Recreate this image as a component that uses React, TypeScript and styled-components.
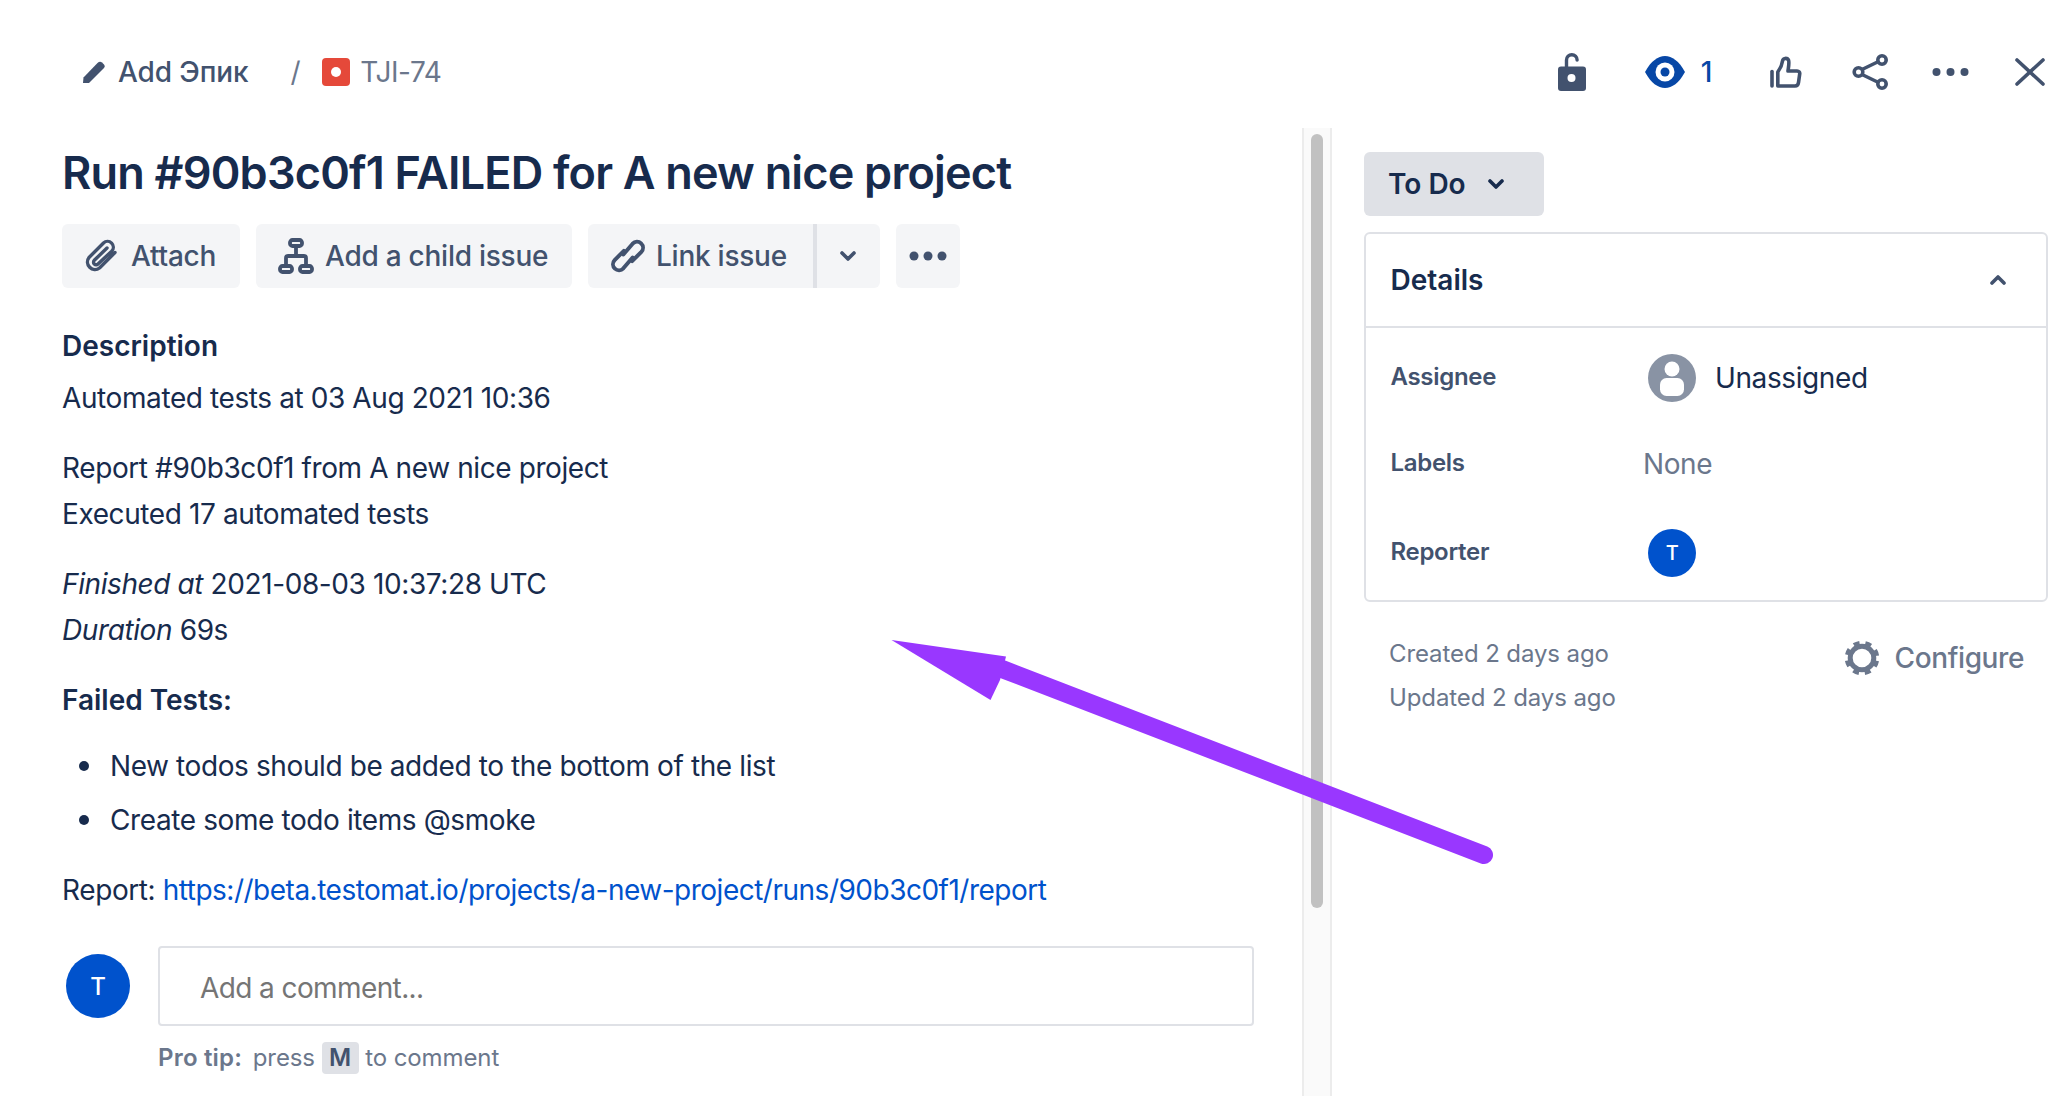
import styled, { createGlobalStyle } from "styled-components";

const GlobalStyle = createGlobalStyle`
  html, body {
    margin: 0;
    padding: 0;
    background: #fff;
  }
  * {
    box-sizing: border-box;
  }
`;

function App() {
  return (
    <Page>
      <GlobalStyle />
      <Header>
        <Breadcrumbs>
          <EpicLink>
            <svg width="22" height="22" viewBox="0 0 22 22">
              <path d="M.5 16.500 14.500 2q2.300-2 4.500-.5l2 2q1.500 2-.5 4L6 22H0z" fill="#42526e" />
            </svg>
            Add Эпик
          </EpicLink>
          <Slash>/</Slash>
          <IssueKey>
            <svg width="28" height="28" viewBox="0 0 28 28">
              <rect width="28" height="28" rx="4" fill="#e5493a" />
              <circle cx="14" cy="14" r="5" fill="#fff" />
            </svg>
            TJI-74
          </IssueKey>
        </Breadcrumbs>
        <HeaderIcons>
          <LockIcon width="28" height="38" viewBox="0 0 28 38">
            <path d="M8.500 17V7a5.300 5.300 0 0 1 10.600 0" fill="none" stroke="#42526e" strokeWidth="3.400" strokeLinecap="round" />
            <rect y="13.500" width="28" height="24.500" rx="3" fill="#42526e" />
            <circle cx="13.500" cy="25" r="4" fill="#fff" />
          </LockIcon>
          <Watchers>
            <svg width="40" height="32" viewBox="0 0 40 32">
              <path d="M0 16C6 5 13 0 20 0s14 5 20 16c-6 11-13 16-20 16S6 27 0 16z" fill="#0747a6" />
              <circle cx="20" cy="16" r="9.500" fill="#fff" />
              <circle cx="20" cy="16" r="4.500" fill="#0747a6" />
            </svg>
            <WatchCount>1</WatchCount>
          </Watchers>
          <ThumbIcon width="32" height="32" viewBox="0 0 32 32" fill="none" stroke="#42526e" strokeWidth="3.600" strokeLinejoin="round" strokeLinecap="round">
            <path d="M2 15.500V30" />
            <path d="M7.800 30V16c2.200-3 4.200-7 4.700-11 .5-3 4.500-3.500 6-1 1 2 0 7-.5 11h9c2 0 3 1.500 2.700 3l-1.200 8.500c-.3 2.300-1.500 3.500-3.500 3.500z" />
          </ThumbIcon>
          <ShareIcon width="37" height="36" viewBox="0 0 37 36" fill="none" stroke="#42526e" strokeWidth="3.600">
            <path d="M10 15.500 25.500 8M10 20.500 25.500 28" />
            <circle cx="6.500" cy="18" r="4.300" />
            <circle cx="30" cy="6" r="4.200" />
            <circle cx="30" cy="30" r="4.200" />
          </ShareIcon>
          <DotsIcon width="37" height="10" viewBox="0 0 37 10" fill="#42526e">
            <circle cx="4.500" cy="5" r="4" />
            <circle cx="18.500" cy="5" r="4" />
            <circle cx="32.500" cy="5" r="4" />
          </DotsIcon>
          <CloseIcon width="30" height="28" viewBox="0 0 30 28" stroke="#42526e" strokeWidth="3.600" strokeLinecap="round">
            <path d="M2 2l26 24M28 2 2 26" />
          </CloseIcon>
        </HeaderIcons>
      </Header>

      <Body>
        <Main>
          <Title>Run #90b3c0f1 FAILED for A new nice project</Title>
          <Actions>
            <ActionButton $width={178}>
              <svg width="36" height="36" viewBox="0 0 36 36" fill="none" stroke="#42526e" strokeWidth="3.400" strokeLinecap="round" strokeLinejoin="round">
                <path d="M31 14.500 15.500 30A7.500 7.500 0 0 1 5 19.500L19.500 5a5.800 5.800 0 0 1 8.200 8.200L14 26a2.600 2.600 0 0 1-3.700-3.700L23 10" />
              </svg>
              Attach
            </ActionButton>
            <ActionButton $width={316}>
              <svg width="36" height="36" viewBox="0 0 36 36" fill="none" stroke="#42526e" strokeWidth="3.800" strokeLinejoin="round">
                <rect x="12" y="2" width="12" height="6" rx="2.500" />
                <rect x="2" y="28" width="12" height="6" rx="2.500" />
                <rect x="22" y="28" width="12" height="6" rx="2.500" />
                <path d="M18 8v10M8 28v-8q0-2 2-2h16q2 0 2 2v8" />
              </svg>
              Add a child issue
            </ActionButton>
            <SplitButton>
              <SplitMain>
                <svg width="36" height="36" viewBox="0 0 35 33" fill="none" stroke="#42526e" strokeWidth="3.800" strokeLinecap="round" strokeLinejoin="round">
                  <path d="M13 15 22 4.500a5.800 5.800 0 0 1 8.500 8l-9 9" />
                  <path d="m22 18-9 10.500a5.800 5.800 0 0 1-8.500-8l9-9" />
                </svg>
                Link issue
              </SplitMain>
              <SplitToggle>
                <Chevron width="16" height="10" viewBox="0 0 16 10" color="#42526e">
                  <path d="M2 2l6 6 6-6" />
                </Chevron>
              </SplitToggle>
            </SplitButton>
            <MoreButton>
              <svg width="38" height="10" viewBox="0 0 38 10" fill="#42526e">
                <circle cx="5" cy="5" r="4.500" />
                <circle cx="19" cy="5" r="4.500" />
                <circle cx="33" cy="5" r="4.500" />
              </svg>
            </MoreButton>
          </Actions>

          <SectionHeading>Description</SectionHeading>
          <Paragraph>Automated tests at 03 Aug 2021 10:36</Paragraph>
          <Paragraph>
            Report #90b3c0f1 from A new nice project
            <br />
            Executed 17 automated tests
          </Paragraph>
          <Paragraph>
            <em>Finished at</em> 2021-08-03 10:37:28 UTC
            <br />
            <em>Duration</em> 69s
          </Paragraph>
          <Paragraph>
            <strong>Failed Tests:</strong>
          </Paragraph>
          <FailedList>
            <li>New todos should be added to the bottom of the list</li>
            <li>Create some todo items @smoke</li>
          </FailedList>
          <Paragraph>
            Report: <ReportLink href="#">https://beta.testomat.io/projects/a-new-project/runs/90b3c0f1/report</ReportLink>
          </Paragraph>

          <CommentRow>
            <CommentAvatar>T</CommentAvatar>
            <CommentBox>Add a comment...</CommentBox>
          </CommentRow>
          <ProTip>
            <strong>Pro tip:</strong> press <Key>M</Key> to comment
          </ProTip>
        </Main>

        <ScrollTrack>
          <ScrollThumb />
        </ScrollTrack>

        <Side>
          <StatusButton>
            To Do
            <Chevron width="16" height="10" viewBox="0 0 16 10" color="#172b4d">
              <path d="M2 2l6 6 6-6" />
            </Chevron>
          </StatusButton>
          <DetailsCard>
            <DetailsHeader>
              Details
              <Chevron width="16" height="10" viewBox="0 0 16 10" color="#42526e">
                <path d="M2 8l6-6 6 6" />
              </Chevron>
            </DetailsHeader>
            <DetailsGrid>
              <FieldLabel>Assignee</FieldLabel>
              <AssigneeValue>
                <svg width="48" height="48" viewBox="0 0 48 48">
                  <circle cx="24" cy="24" r="24" fill="#8993a4" />
                  <circle cx="24" cy="15" r="7.500" fill="#fff" />
                  <rect x="12" y="24" width="24" height="18" rx="6.500" fill="#fff" />
                </svg>
                Unassigned
              </AssigneeValue>
              <FieldLabel>Labels</FieldLabel>
              <NoneValue>None</NoneValue>
              <FieldLabel>Reporter</FieldLabel>
              <ReporterValue>
                <ReporterAvatar>T</ReporterAvatar>
              </ReporterValue>
            </DetailsGrid>
          </DetailsCard>
          <SideFooter>
            <Dates>
              <div>Created 2 days ago</div>
              <div>Updated 2 days ago</div>
            </Dates>
            <ConfigureLink>
              <svg width="36" height="36" viewBox="0 0 36 36" fill="none" stroke="#6b778c">
                <circle cx="18" cy="18" r="11.800" strokeWidth="5" />
                <circle cx="18" cy="18" r="15.300" strokeWidth="4" strokeDasharray="6 6.017" strokeDashoffset="-3" />
              </svg>
              Configure
            </ConfigureLink>
          </SideFooter>
        </Side>
      </Body>

      <ArrowOverlay width="2068" height="1096" viewBox="0 0 2068 1096">
        <path d="M1002 669 L1484 855" fill="none" stroke="#9937ff" strokeWidth="18" strokeLinecap="round" />
        <path d="M891.500 640 L1006 656.500 L1000 680 L990.500 700 Z" fill="#9937ff" />
      </ArrowOverlay>
    </Page>
  );
}

const Page = styled.div`
  position: relative;
  width: 2068px;
  height: 1096px;
  overflow: hidden;
  background: #fff;
  color: #172b4d;
  font-family: Inter, "Noto Sans", "Liberation Sans", sans-serif;
  font-size: 28px;
  letter-spacing: -0.4px;
`;

const Header = styled.header`
  display: flex;
  align-items: center;
  justify-content: space-between;
  height: 128px;
  padding: 16px 23px 0 83px;
`;

const Breadcrumbs = styled.div`
  display: flex;
  align-items: center;
`;

const EpicLink = styled.span`
  display: flex;
  align-items: center;
  gap: 13px;
  color: #42526e;
  font-weight: 500;
  letter-spacing: -0.1px;
`;

const Slash = styled.span`
  margin: 0 22px 0 42px;
  color: #6b778c;
`;

const IssueKey = styled.span`
  display: flex;
  align-items: center;
  gap: 10px;
  color: #6b778c;
`;

const HeaderIcons = styled.div`
  display: flex;
  align-items: center;
`;

const LockIcon = styled.svg`
  margin-right: 59px;
`;

const Watchers = styled.div`
  display: flex;
  align-items: center;
  gap: 16px;
  margin-right: 58px;
`;

const WatchCount = styled.span`
  color: #0747a6;
  font-weight: 500;
`;

const ThumbIcon = styled.svg`
  margin-right: 50px;
`;

const ShareIcon = styled.svg`
  margin-right: 43px;
`;

const DotsIcon = styled.svg`
  margin-right: 46px;
`;

const CloseIcon = styled.svg``;

const Body = styled.div`
  display: flex;
  height: 968px;
`;

const Main = styled.main`
  flex: none;
  width: 1302px;
  padding-left: 62px;
`;

const Title = styled.h1`
  margin: 0;
  font-size: 45px;
  font-weight: 600;
  line-height: 90px;
  letter-spacing: -0.8px;
`;

const Actions = styled.div`
  display: flex;
  gap: 16px;
  margin-top: 6px;
`;

const ActionButton = styled.div<{ $width: number }>`
  display: flex;
  align-items: center;
  gap: 11px;
  width: ${(p) => p.$width}px;
  height: 64px;
  padding-left: 22px;
  border-radius: 6px;
  background: #f4f5f7;
  color: #42526e;
  font-weight: 500;
  letter-spacing: -0.25px;
`;

const SplitButton = styled.div`
  display: flex;
  height: 64px;
  border-radius: 6px;
  background: #f4f5f7;
  color: #42526e;
  font-weight: 500;
  letter-spacing: -0.25px;
  overflow: hidden;
`;

const SplitMain = styled.div`
  display: flex;
  align-items: center;
  gap: 10px;
  width: 225px;
  padding-left: 22px;
`;

const SplitToggle = styled.div`
  display: flex;
  align-items: center;
  justify-content: center;
  width: 67px;
  padding-right: 2px;
  border-left: 4px solid #dfe1e6;
`;

const MoreButton = styled.div`
  display: flex;
  align-items: center;
  justify-content: center;
  width: 64px;
  height: 64px;
  border-radius: 6px;
  background: #f4f5f7;
`;

const Chevron = styled.svg<{ color: string }>`
  fill: none;
  stroke: ${(p) => p.color};
  stroke-width: 3.6;
  stroke-linecap: round;
  stroke-linejoin: round;
`;

const SectionHeading = styled.h2`
  margin: 35px 0 6px;
  font-size: 28px;
  font-weight: 600;
  line-height: 46px;
  letter-spacing: 0;
`;

const Paragraph = styled.p`
  margin: 0 0 24px;
  line-height: 46px;

  strong {
    font-weight: 600;
    letter-spacing: 0;
  }
`;

const FailedList = styled.ul`
  margin: -4px 0 24px;
  padding-left: 48px;
  line-height: 46px;
  list-style: none;

  li {
    position: relative;
  }

  li::before {
    content: "";
    position: absolute;
    top: 18px;
    left: -31px;
    width: 10px;
    height: 10px;
    border-radius: 50%;
    background: #172b4d;
  }

  li + li {
    margin-top: 8px;
  }
`;

const ReportLink = styled.a`
  color: #0052cc;
  letter-spacing: -0.5px;
  text-decoration: none;
`;

const CommentRow = styled.div`
  display: flex;
  gap: 28px;
  width: 1192px;
  margin-top: 33px;
  padding-left: 4px;
`;

const CommentAvatar = styled.div`
  display: flex;
  flex: none;
  align-items: center;
  justify-content: center;
  width: 64px;
  height: 64px;
  margin-top: 8px;
  border-radius: 50%;
  background: #0052cc;
  color: #fff;
  font-size: 24px;
  font-weight: 500;
`;

const CommentBox = styled.div`
  display: flex;
  flex: 1;
  align-items: center;
  height: 80px;
  padding: 4px 0 0 40px;
  border: 2.500px solid #dfe1e6;
  border-radius: 4px;
  color: #757575;
  letter-spacing: -0.6px;
`;

const ProTip = styled.div`
  margin: 9px 0 0 96px;
  color: #6b778c;
  font-size: 24px;
  letter-spacing: -0.1px;
  line-height: 46px;

  strong {
    margin-right: 4px;
    font-weight: 600;
    letter-spacing: 0.2px;
  }
`;

const Key = styled.span`
  display: inline-block;
  width: 37px;
  height: 32px;
  border-radius: 4px;
  background: #dfe1e6;
  color: #42526e;
  font-weight: 600;
  line-height: 32px;
  text-align: center;
`;

const ScrollTrack = styled.div`
  flex: none;
  width: 30px;
  padding: 6px 7px 0;
  border-left: 2px solid #ececec;
  border-right: 2px solid #ececec;
  background: #fafafa;
`;

const ScrollThumb = styled.div`
  height: 774px;
  border-radius: 8px;
  background: #c1c1c1;
`;

const Side = styled.aside`
  flex: none;
  width: 736px;
  padding: 24px 20px 0 32px;
`;

const StatusButton = styled.div`
  display: flex;
  align-items: center;
  gap: 22px;
  width: 180px;
  height: 64px;
  padding-left: 24px;
  border-radius: 6px;
  background: #dfe1e6;
  font-weight: 600;
  letter-spacing: 0;
`;

const DetailsCard = styled.section`
  height: 370px;
  margin-top: 16px;
  border: 2.500px solid #dfe1e6;
  border-radius: 6px;
`;

const DetailsHeader = styled.div`
  display: flex;
  align-items: center;
  justify-content: space-between;
  height: 93.500px;
  padding: 0 40px 0 24.500px;
  border-bottom: 2.500px solid #dfe1e6;
  font-weight: 600;
  letter-spacing: 0;
`;

const DetailsGrid = styled.div`
  display: grid;
  grid-template-columns: 252.500px 1fr;
  grid-template-rows: 87px 86px 92px;
  align-items: center;
  padding: 6px 0 0 24.500px;
`;

const FieldLabel = styled.div`
  padding-bottom: 2px;
  color: #42526e;
  font-size: 24px;
  font-weight: 600;
  letter-spacing: -0.3px;
`;

const AssigneeValue = styled.div`
  display: flex;
  align-items: center;
  gap: 19px;
  padding: 2px 0 0 5px;
`;

const NoneValue = styled.div`
  color: #6b778c;
`;

const ReporterValue = styled.div`
  padding-left: 5px;
`;

const ReporterAvatar = styled.div`
  display: flex;
  align-items: center;
  justify-content: center;
  width: 48px;
  height: 48px;
  border-radius: 50%;
  background: #0052cc;
  color: #fff;
  font-size: 20px;
  font-weight: 500;
`;

const SideFooter = styled.div`
  display: flex;
  justify-content: space-between;
  margin-top: 30px;
  padding: 0 24px 0 25px;
`;

const Dates = styled.div`
  color: #6b778c;
  font-size: 24px;
  letter-spacing: -0.1px;
  line-height: 44px;
`;

const ConfigureLink = styled.div`
  display: flex;
  align-items: center;
  gap: 15px;
  height: 52px;
  color: #6b778c;
  font-weight: 500;
`;

const ArrowOverlay = styled.svg`
  position: absolute;
  top: 0;
  left: 0;
  pointer-events: none;
`;

export default App;
